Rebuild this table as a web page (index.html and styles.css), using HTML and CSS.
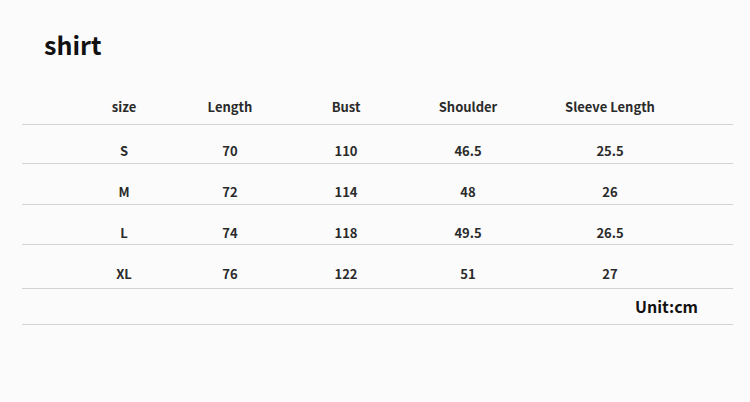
FILE: index.html
```html
<!DOCTYPE html>
<html>
<head>
<meta charset="utf-8">
<link rel="stylesheet" href="styles.css">
</head>
<body>
<div class="page">
  <h1 class="title">shirt</h1>
  <div class="chart">
    <div class="row row-head">
      <span></span><span>size</span><span>Length</span><span>Bust</span><span>Shoulder</span><span>Sleeve Length</span>
    </div>
    <div class="row row-s">
      <span></span><span>S</span><span>70</span><span>110</span><span>46.5</span><span>25.5</span>
    </div>
    <div class="row row-m">
      <span></span><span>M</span><span>72</span><span>114</span><span>48</span><span>26</span>
    </div>
    <div class="row row-l">
      <span></span><span>L</span><span>74</span><span>118</span><span>49.5</span><span>26.5</span>
    </div>
    <div class="row row-xl">
      <span></span><span>XL</span><span>76</span><span>122</span><span>51</span><span>27</span>
    </div>
    <div class="unit-row">
      <span class="unit">Unit:cm</span>
    </div>
  </div>
</div>
</body>
</html>
```
FILE: styles.css
```css
html, body {
  margin: 0;
  padding: 0;
  background: #fbfbfb;
}
body {
  width: 750px;
  height: 402px;
  overflow: hidden;
  font-family: "Noto Sans CJK SC", "Noto Sans", sans-serif;
  color: #222;
}
.page {
  padding-left: 22px;
}
.title {
  margin: 0;
  padding: 30px 0 0 22px;
  height: 90px;
  box-sizing: border-box;
  font-size: 25px;
  line-height: 28px;
  font-weight: 700;
  color: #111;
}
.chart {
  width: 711px;
}
.row {
  display: grid;
  grid-template-columns: 50px 104px 108px 124px 120px 164px 1fr;
  align-items: end;
  border-bottom: 1px solid #d2d2d2;
  box-sizing: border-box;
  font-size: 13px;
  line-height: 18px;
  font-weight: 600;
  color: #2a2a2a;
}
.row span {
  text-align: center;
}
.row-head { height: 35px; padding-bottom: 8px; }
.row-s { height: 39px; padding-bottom: 3px; }
.row-m { height: 41px; padding-bottom: 3px; }
.row-l { height: 40px; padding-bottom: 2px; }
.row-xl { height: 44px; padding-bottom: 5px; }
.unit-row {
  display: flex;
  justify-content: flex-end;
  align-items: flex-end;
  height: 36px;
  box-sizing: border-box;
  padding: 0 35px 7px 0;
  border-bottom: 1px solid #d2d2d2;
}
.unit {
  font-size: 16px;
  line-height: 22px;
  font-weight: 700;
  color: #111;
}
```
